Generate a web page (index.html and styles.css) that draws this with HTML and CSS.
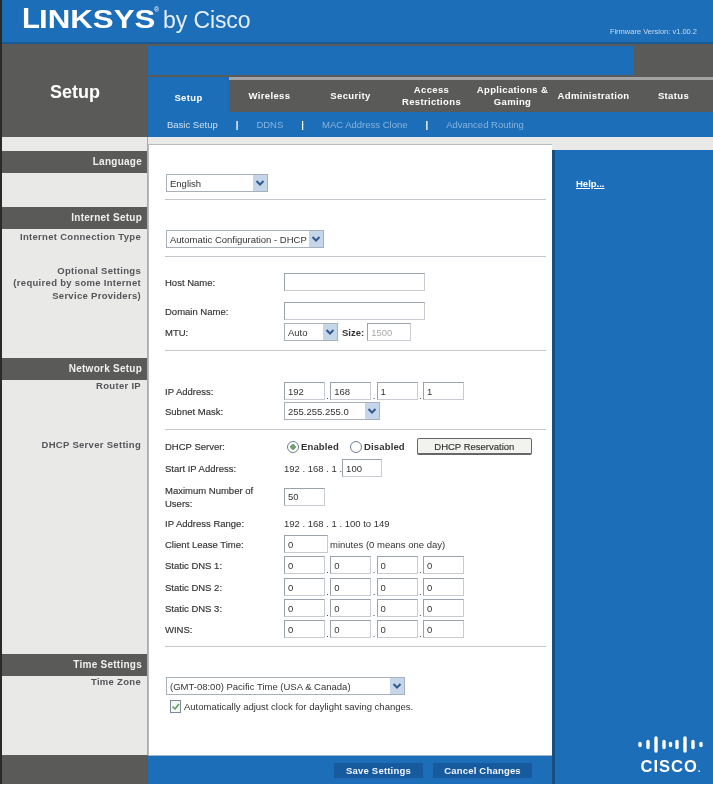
FILE: index.html
```html
<!DOCTYPE html>
<html lang="en">
<head>
<meta charset="utf-8">
<title>Linksys by Cisco - Setup</title>
<link rel="stylesheet" href="styles.css">
</head>
<body>
<div class="page">
  <header class="brand">
    <div class="logo"><span class="logo-l">L</span><span class="logo-rest">INKSYS</span><sup class="logo-r">®</sup><span class="logo-by">by Cisco</span></div>
    <div class="firmware">Firmware Version: v1.00.2</div>
  </header>

  <section class="topnav">
    <div class="page-title">Setup</div>
    <div class="nav-main">
      <div class="nav-blue-row"><div class="nav-blue"></div></div>
      <nav class="tabs">
        <a class="tab active">Setup</a>
        <a class="tab">Wireless</a>
        <a class="tab">Security</a>
        <a class="tab">Access<br>Restrictions</a>
        <a class="tab">Applications &amp;<br>Gaming</a>
        <a class="tab">Administration</a>
        <a class="tab">Status</a>
      </nav>
      <div class="subnav">
        <a class="sub current">Basic Setup</a><i class="bar">|</i>
        <a class="sub">DDNS</a><i class="bar">|</i>
        <a class="sub">MAC Address Clone</a><i class="bar">|</i>
        <a class="sub">Advanced Routing</a>
      </div>
    </div>
  </section>

  <main class="body-grid">
    <aside class="side">
      <div class="side-sec s-lang"><h3 class="band">Language</h3></div>
      <div class="side-sec s-inet">
        <h3 class="band">Internet Setup</h3>
        <p class="side-label first-inet">Internet Connection Type</p>
        <p class="side-label opt">Optional Settings<br>(required by some Internet<br>Service Providers)</p>
      </div>
      <div class="side-sec s-net">
        <h3 class="band">Network Setup</h3>
        <p class="side-label">Router IP</p>
        <p class="side-label dhcp">DHCP Server Setting</p>
      </div>
      <div class="side-sec s-time">
        <h3 class="band">Time Settings</h3>
        <p class="side-label">Time Zone</p>
      </div>
    </aside>

    <form class="panel">
      <div class="sec sec-lang">
        <div class="row"><select class="sel w-lang"><option>English</option></select></div>
      </div>
      <div class="sec sec-type">
        <div class="row"><select class="sel w-type"><option>Automatic Configuration - DHCP</option></select></div>
      </div>
      <div class="sec sec-opt">
        <div class="row"><label class="lbl">Host Name:</label><input class="inp w-host"></div>
        <div class="row mt11"><label class="lbl">Domain Name:</label><input class="inp w-host"></div>
        <div class="row mt3"><label class="lbl">MTU:</label><select class="sel w-mtu"><option>Auto</option></select><span class="txt size">Size:</span><input class="inp w-size dim" value="1500"></div>
      </div>
      <div class="sec sec-net">
        <div class="row"><label class="lbl">IP Address:</label><span class="ip"><input class="inp oct" value="192"><b>.</b><input class="inp oct" value="168"><b>.</b><input class="inp oct" value="1"><b>.</b><input class="inp oct" value="1"></span></div>
        <div class="row mt2"><label class="lbl">Subnet Mask:</label><select class="sel w-mask"><option>255.255.255.0</option></select></div>
      </div>
      <div class="sec sec-dhcp">
        <div class="row r17"><label class="lbl">DHCP Server:</label>
          <input type="radio" class="radio" name="d" checked><span class="txt strong en">Enabled</span>
          <input type="radio" class="radio dis" name="d"><span class="txt strong">Disabled</span>
          <button type="button" class="btn-res">DHCP Reservation</button>
        </div>
        <div class="row mt4"><label class="lbl">Start IP Address:</label><span class="txt">192 . 168 . 1 .</span><input class="inp w-start" value="100"></div>
        <div class="row r25 mt7"><label class="lbl two">Maximum Number of Users:</label><input class="inp oct" value="50"></div>
        <div class="row mt5"><label class="lbl">IP Address Range:</label><span class="txt">192 . 168 . 1 . 100 to 149</span></div>
        <div class="row mt3"><label class="lbl">Client Lease Time:</label><input class="inp w-lease" value="0"><span class="txt lease">minutes (0 means one day)</span></div>
        <div class="row mt3"><label class="lbl">Static DNS 1:</label><span class="ip"><input class="inp oct" value="0"><b>.</b><input class="inp oct" value="0"><b>.</b><input class="inp oct" value="0"><b>.</b><input class="inp oct" value="0"></span></div>
        <div class="row mt4"><label class="lbl">Static DNS 2:</label><span class="ip"><input class="inp oct" value="0"><b>.</b><input class="inp oct" value="0"><b>.</b><input class="inp oct" value="0"><b>.</b><input class="inp oct" value="0"></span></div>
        <div class="row mt3"><label class="lbl">Static DNS 3:</label><span class="ip"><input class="inp oct" value="0"><b>.</b><input class="inp oct" value="0"><b>.</b><input class="inp oct" value="0"><b>.</b><input class="inp oct" value="0"></span></div>
        <div class="row mt3"><label class="lbl">WINS:</label><span class="ip"><input class="inp oct" value="0"><b>.</b><input class="inp oct" value="0"><b>.</b><input class="inp oct" value="0"><b>.</b><input class="inp oct" value="0"></span></div>
      </div>
      <div class="sec sec-time">
        <div class="row"><select class="sel w-zone"><option>(GMT-08:00) Pacific Time (USA &amp; Canada)</option></select></div>
        <div class="row r13 mt5"><input type="checkbox" class="check" checked><span class="txt">Automatically adjust clock for daylight saving changes.</span></div>
      </div>
    </form>

    <aside class="help">
      <a class="help-link">Help...</a>
      <div class="cisco">
        <svg class="cisco-bars" viewBox="0 0 67 17" width="67" height="17" aria-hidden="true">
          <g fill="none" stroke="#fff" stroke-width="3.400" stroke-linecap="round">
            <path d="M3 7.500v2"/><path d="M11 5.500v6"/><path d="M19 2v13"/><path d="M27 5.500v6"/><path d="M33.500 7.500v2"/><path d="M40 5.500v6"/><path d="M48 2v13"/><path d="M56 5.500v6"/><path d="M64 7.500v2"/>
          </g>
        </svg>
        <div class="cisco-word">CISCO<span class="cisco-dot">.</span></div>
      </div>
    </aside>

    <div class="foot-left"></div>
    <div class="foot">
      <button type="button" class="fbtn save">Save Settings</button>
      <button type="button" class="fbtn cancel">Cancel Changes</button>
    </div>
  </main>
</div>
</body>
</html>
```
FILE: styles.css
```css
* { box-sizing: border-box; }
html, body { margin: 0; padding: 0; background: #fff; }
body { font-family: "Liberation Sans", Arial, sans-serif; color: #333; }

.page {
  width: 713px;
  height: 784px;
  border-left: 2px solid #2a2a2a;
  display: flex;
  flex-direction: column;
  filter: blur(0.6px);
  overflow: hidden;
}

/* brand */
.brand {
  height: 44px;
  background: #1d6eb8;
  border-bottom: 2px solid #1a5a90;
  display: flex;
  justify-content: space-between;
  color: #fff;
}
.logo { padding-left: 20px; height: 41px; white-space: nowrap; display: flex; align-items: baseline; line-height: 36px; }
.logo-l { font-size: 30px; font-weight: 700; display: inline-block; transform: scaleX(.98); transform-origin: left; width: 17px; }
.logo-rest { font-size: 25px; font-weight: 700; display: inline-block; transform: scaleX(1.25); transform-origin: left; width: 118px; }
.logo-r { font-size: 7px; line-height: 1; align-self: flex-start; margin: 6px 0 0 -3px; width: 9px; }
.logo-by { font-size: 23px; color: #e4eef8; letter-spacing: -.1px; }
.firmware { font-size: 7.500px; color: #c9dcee; align-self: flex-end; padding: 0 16px 6px 0; white-space: nowrap; }

/* top nav */
.topnav { height: 93px; display: flex; background: #5a5a58; }
.page-title { width: 146px; color: #fff; font-size: 18px; font-weight: 700; text-align: center; padding-top: 38px; }
.nav-main { flex: 1; display: flex; flex-direction: column; min-width: 0; }
.nav-blue-row { height: 33px; padding-top: 2px; }
.nav-blue { height: 29px; width: 486px; background: #1d6eb8; }
.tabs { height: 35px; display: grid; grid-template-columns: repeat(6, 81px) 1fr; background: #5a5a58; border-top: 3px solid #a4a4a4; }
.tab { display: flex; align-items: center; justify-content: center; text-align: center; color: #fff; font-size: 9.500px; line-height: 12px; font-weight: 700; letter-spacing: .35px; white-space: nowrap; }
.tab.active { background: #1d6eb8; margin-top: -3px; padding-top: 6px; }
.subnav { height: 25px; background: #1d6eb8; display: flex; align-items: center; padding-left: 19px; font-size: 9.500px; color: #87b4dc; white-space: nowrap; }
.sub.current { color: #cfe0f0; }
.bar { font-style: normal; color: #fff; font-weight: 700; margin: 0 18px; }

/* body */
.body-grid {
  flex: 1;
  display: grid;
  grid-template-columns: 146px 404px 1fr;
  grid-template-rows: 618px 29px;
  background: #e9e9e7;
  min-height: 0;
}

/* sidebar */
.side { grid-column: 1; grid-row: 1; background: #e9e9e7; border-right: 1px solid #aaa; }
.s-lang { padding-top: 14px; height: 70px; }
.s-inet { height: 151px; }
.s-net { height: 296px; }
.s-time { height: 101px; }
.band { margin: 0; height: 22px; background: #5a5a58; color: #f0f0f0; font-size: 10px; font-weight: 700; line-height: 21px; text-align: right; padding-right: 5px; letter-spacing: .25px; }
.side-label { margin: 0; color: #55555a; font-size: 9.500px; font-weight: 700; line-height: 12.500px; text-align: right; padding-right: 6px; white-space: nowrap; letter-spacing: .3px; }
.first-inet { margin-top: 2px; }
.opt { margin-top: 21px; }
.dhcp { margin-top: 46px; }

/* panel */
.panel { grid-column: 2; grid-row: 1; margin-top: 7px; background: #fff; padding: 0 6px 0 16px; border-top: 1px solid #bbb; border-left: 1px solid #bbb; font-size: 9.500px; }
.sec { border-bottom: 1px solid #c4c8cc; }
.sec-lang { padding: 29px 0 7px; }
.sec-type { padding: 30px 0 8px; }
.sec-opt { padding: 16px 0 9px; }
.sec-net { padding: 31px 0 9px; }
.sec-dhcp { padding: 8px 0 8px; }
.sec-time { padding: 30px 0 0; border-bottom: 0; }
.row { display: flex; align-items: center; height: 18px; }
.r17 { height: 17px; }
.r25 { height: 25px; }
.r13 { height: 13px; padding-left: 5px; }
.mt2 { margin-top: 2px; }
.mt3 { margin-top: 3px; }
.mt4 { margin-top: 4px; }
.mt5 { margin-top: 5px; }
.mt7 { margin-top: 7px; }
.mt11 { margin-top: 11px; }
.lbl { width: 119px; flex: none; color: #333; font-weight: 400; -webkit-text-stroke: .15px #333; line-height: 13px; }
.lbl.two { padding-right: 25px; }
.txt { color: #333; white-space: nowrap; }
.strong { font-weight: 700; letter-spacing: .15px; }
.en { margin-right: 8px; }
.size { margin: 0 3px 0 4px; font-weight: 700; }
.lease { margin-left: 2px; }

.inp { height: 18px; border: 1px solid #9aa2ac; border-right-color: #c8ccd2; border-bottom-color: #c8ccd2; background: #fff; font: 9.500px "Liberation Sans", Arial, sans-serif; color: #333; padding: 0 3px; margin: 0; outline: 0; }
.oct { width: 41px; }
.w-host { width: 141px; }
.w-size { width: 44px; }
.w-start { width: 40px; }
.w-lease { width: 44px; }
.dim { color: #aaa; }
.ip { display: flex; align-items: center; }
.ip b { width: 5.300px; text-align: center; font-weight: 400; line-height: 1; align-self: flex-end; }

.sel {
  appearance: none;
  -webkit-appearance: none;
  height: 18px;
  border: 1px solid #a8b0ba;
  border-radius: 0;
  font: 9.500px "Liberation Sans", Arial, sans-serif;
  color: #333;
  padding: 0 14px 0 3px;
  background: #fff url("data:image/svg+xml,%3Csvg xmlns='http://www.w3.org/2000/svg' width='14' height='16'%3E%3Crect width='14' height='16' fill='%23c6d6ea'/%3E%3Cpath d='M3.500 6l3.500 3.500L10.500 6' fill='none' stroke='%23305a8c' stroke-width='2'/%3E%3C/svg%3E") no-repeat right 0 center;
}
.sec-lang .sel, .sec-type .sel, .sec-time .sel { margin-left: 1px; }
.w-lang { width: 102px; }
.w-type { width: 158px; }
.w-mtu { width: 54px; }
.w-mask { width: 96px; }
.w-zone { width: 239px; }

.radio { appearance: none; -webkit-appearance: none; width: 12px; height: 12px; margin: 0 2px 0 3px; border: 1px solid #6f7f8e; border-radius: 50%; background: #fff; flex: none; }
.radio:checked { background: radial-gradient(circle, #6fa06f 0 2.500px, #fff 3px); }
.btn-res { margin-left: 12px; width: 115px; height: 17px; border: 1px solid #666; border-bottom-width: 2px; border-radius: 2px; background: #f2f2ee; font: 9.500px "Liberation Sans", Arial, sans-serif; color: #333; -webkit-text-stroke: .15px #333; padding: 0; }
.check { appearance: none; -webkit-appearance: none; width: 11px; height: 13px; margin: 0 3px 0 0; border: 1px solid #7a8a98; flex: none; background: #f4f8f0 url("data:image/svg+xml,%3Csvg xmlns='http://www.w3.org/2000/svg' width='9' height='11'%3E%3Cpath d='M1.500 5.500l2.500 2.500 4-5' fill='none' stroke='%235c9a5c' stroke-width='1.500'/%3E%3C/svg%3E") no-repeat center; }

/* help column */
.help { grid-column: 3; grid-row: 1 / 3; margin-top: 13px; background: #1d6eb8; border-left: 3px solid #174f80; display: flex; flex-direction: column; justify-content: space-between; padding: 28px 9px 7px 21px; }
.help-link { color: #fff; font-size: 9.500px; font-weight: 700; text-decoration: underline; }
.cisco { align-self: flex-end; width: 67px; color: #fff; text-align: center; }
.cisco-bars { display: block; }
.cisco-word { font-size: 16.500px; font-weight: 700; letter-spacing: 1px; line-height: 16px; white-space: nowrap; margin-top: 5px; }
.cisco-dot { font-size: 9px; letter-spacing: 0; }

/* footer */
.foot-left { grid-column: 1; grid-row: 2; background: #5a5a58; }
.foot { grid-column: 2; grid-row: 2; background: #1d6eb8; border-top: 1px solid #9fb8cf; display: flex; justify-content: flex-end; align-items: center; gap: 10px; padding-right: 20px; padding-top: 1px; }
.fbtn { border: 0; height: 15px; background: #175a9e; color: #f2f6fb; font: 700 9.500px "Liberation Sans", Arial, sans-serif; letter-spacing: .2px; padding: 0; }
.save { width: 89px; }
.cancel { width: 99px; }
```
